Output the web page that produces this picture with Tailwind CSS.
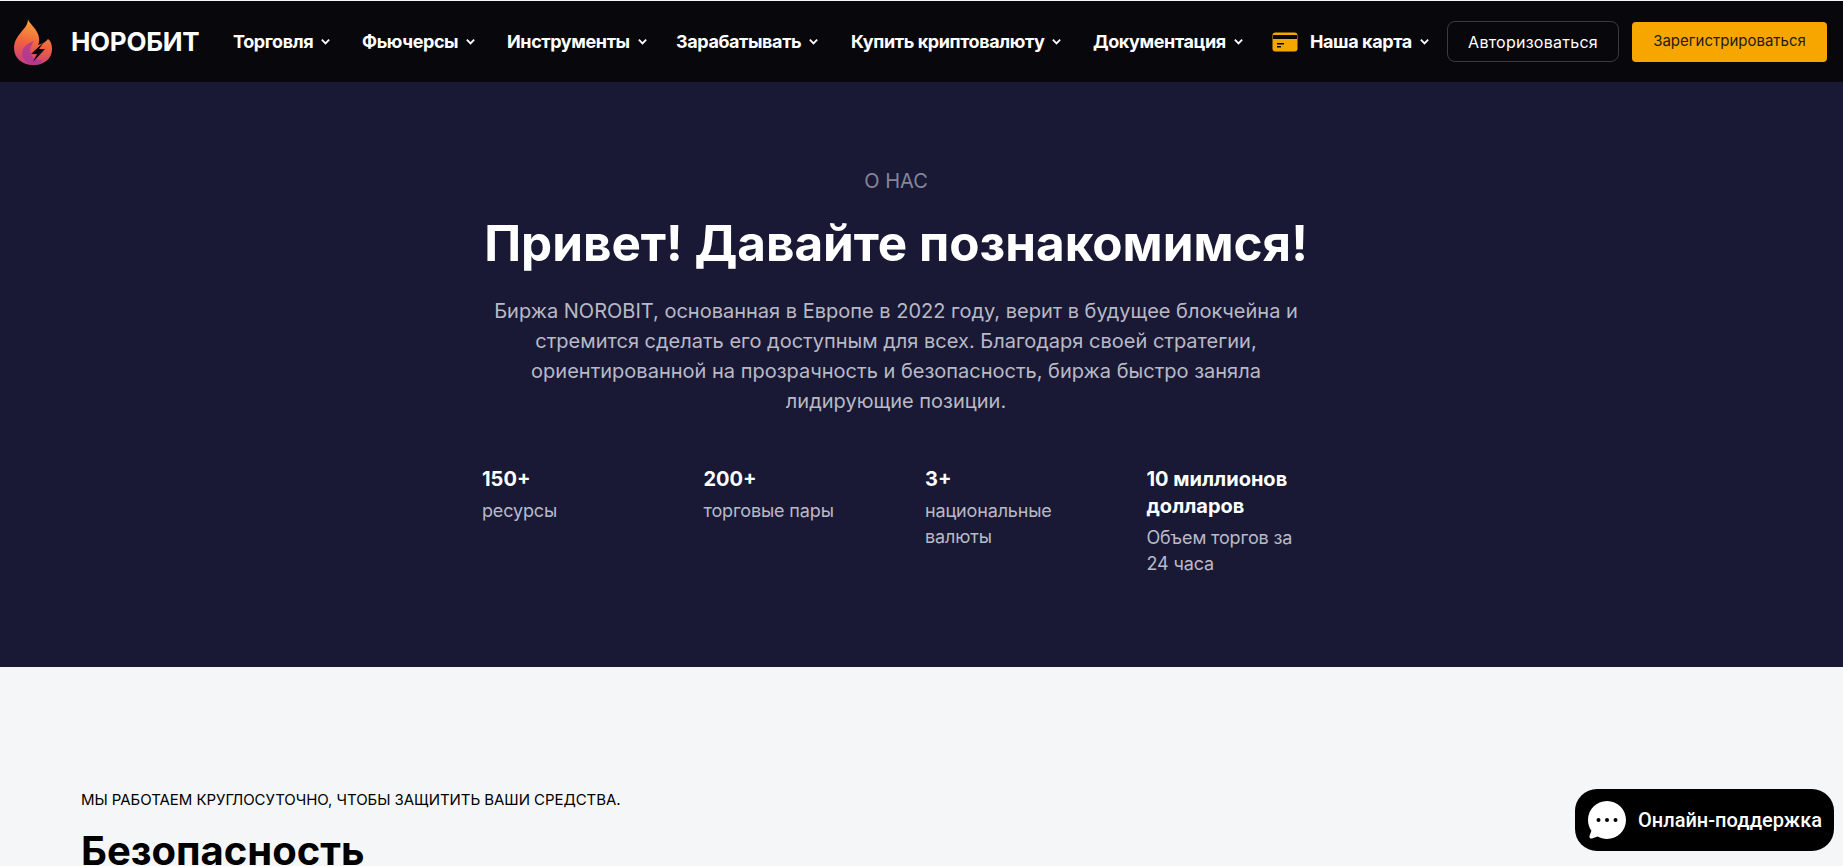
<!DOCTYPE html>
<html lang="ru">
<head>
  <meta charset="UTF-8" />
  <meta name="viewport" content="width=device-width, initial-scale=1" />
  <title>НОРОБИТ - О нас</title>
  <script src="https://cdn.jsdelivr.net/npm/@tailwindcss/browser@4"></script>
</head>
<body class="bg-[#f5f6f8] font-['Inter',sans-serif] h-[866px] overflow-hidden relative">
  <!-- шапка -->
  <header class="mt-px h-[81px] bg-[#07070c] flex items-center pl-[13px] pr-[16px] text-white">
    <a class="flex items-center w-[220px] shrink-0">
      <svg class="w-[40px] h-[48px]" viewBox="0 0 40 48">
        <defs>
          <linearGradient id="fl" x1="0.6" y1="0" x2="0.4" y2="1">
            <stop offset="0" stop-color="#fdaa3a" />
            <stop offset="0.55" stop-color="#f0623f" />
            <stop offset="1" stop-color="#c93d7c" />
          </linearGradient>
        </defs>
        <path fill="url(#fl)" d="M15 1C16 6 25 11 26 20C26.500 23 26 25 25 27C29 26 33 24 35 21C38 23 39 27 39 31C39 41 31 47 20 47C9 47 1 40 1 30C1 23 5 18 9 13C12 10 15 6 15 1z" />
        <path fill="#a8369a" fill-opacity="0.75" d="M23 47c-8 0-14-5-14-11 0-6 5-11 12-13-3 4-5 9-3 13 1 4 6 6 12 6-2 3-4 5-7 5z" />
        <path fill="#07070c" d="M31 24 18 36h6l-4 8 12-13h-6z" />
      </svg>
      <span class="ml-[18px] text-[26px] font-bold tracking-[-0.3px]">НОРОБИТ</span>
    </a>
    <nav class="flex items-center text-[18px] font-bold tracking-[-0.4px]">
      <a class="flex items-center w-[129px]">Торговля<svg class="ml-[7px] w-[11px] h-[11px]" viewBox="0 0 12 12" fill="none" stroke="currentColor" stroke-width="2"><path d="M2 4l4 4 4-4" /></svg></a>
      <a class="flex items-center w-[145px]">Фьючерсы<svg class="ml-[7px] w-[11px] h-[11px]" viewBox="0 0 12 12" fill="none" stroke="currentColor" stroke-width="2"><path d="M2 4l4 4 4-4" /></svg></a>
      <a class="flex items-center w-[169px]">Инструменты<svg class="ml-[7px] w-[11px] h-[11px]" viewBox="0 0 12 12" fill="none" stroke="currentColor" stroke-width="2"><path d="M2 4l4 4 4-4" /></svg></a>
      <a class="flex items-center w-[175px]">Зарабатывать<svg class="ml-[7px] w-[11px] h-[11px]" viewBox="0 0 12 12" fill="none" stroke="currentColor" stroke-width="2"><path d="M2 4l4 4 4-4" /></svg></a>
      <a class="flex items-center w-[242px]">Купить криптовалюту<svg class="ml-[7px] w-[11px] h-[11px]" viewBox="0 0 12 12" fill="none" stroke="currentColor" stroke-width="2"><path d="M2 4l4 4 4-4" /></svg></a>
      <a class="flex items-center w-[179px]">Документация<svg class="ml-[7px] w-[11px] h-[11px]" viewBox="0 0 12 12" fill="none" stroke="currentColor" stroke-width="2"><path d="M2 4l4 4 4-4" /></svg></a>
      <a class="flex items-center">
        <svg class="w-[26px] h-[20px] mr-[12px]" viewBox="0 0 26 20">
          <rect x="0.500" y="0.500" width="25" height="19" rx="3" fill="#f7a600" />
          <rect x="1" y="3" width="24" height="4" fill="#07070c" />
          <path d="M5 11h7v1.500H5zM5 14h4v1.500H5z" fill="#07070c" />
        </svg>
        Наша карта<svg class="ml-[7px] w-[11px] h-[11px]" viewBox="0 0 12 12" fill="none" stroke="currentColor" stroke-width="2"><path d="M2 4l4 4 4-4" /></svg>
      </a>
    </nav>
    <div class="ml-auto flex items-center gap-[13px]">
      <a class="w-[172px] h-[41px] border border-[#3a3a40] rounded-[8px] flex items-center justify-center text-[16px] tracking-[0.25px]">Авторизоваться</a>
      <a class="w-[195px] h-[40px] bg-[#f7a600] text-[#1c1c1c] rounded-[4px] flex items-center justify-center text-[15px]">Зарегистрироваться</a>
    </div>
  </header>

  <!-- о нас -->
  <section class="h-[585px] bg-[#191935] text-white pt-[86px] pl-[482px]">
    <div class="w-[828px] flex flex-col items-center">
      <p class="text-[20px] leading-[26px] text-[#85859a]">О НАС</p>
      <h1 class="mt-[15px] text-[49.400px] leading-[68px] font-bold whitespace-nowrap">Привет! Давайте познакомимся!</h1>
      <p class="mt-[19px] w-[828px] text-center text-[20px] leading-[30px] text-[#b9b9c6]">Биржа NOROBIT, основанная в Европе в 2022 году, верит в будущее блокчейна и стремится сделать его доступным для всех. Благодаря своей стратегии, ориентированной на прозрачность и безопасность, биржа быстро заняла лидирующие позиции.</p>
      <div class="mt-[50px] w-[828px] grid grid-cols-[repeat(4,221.500px)]">
        <div class="pr-[50px]">
          <p class="text-[20px] leading-[27px] font-bold">150+</p>
          <p class="mt-[5px] text-[18px] leading-[26px] tracking-[-0.15px] text-[#b9b9c6]">ресурсы</p>
        </div>
        <div class="pr-[50px]">
          <p class="text-[20px] leading-[27px] font-bold">200+</p>
          <p class="mt-[5px] text-[18px] leading-[26px] tracking-[-0.15px] text-[#b9b9c6]">торговые пары</p>
        </div>
        <div class="pr-[50px]">
          <p class="text-[20px] leading-[27px] font-bold">3+</p>
          <p class="mt-[5px] text-[18px] leading-[26px] tracking-[-0.15px] text-[#b9b9c6]">национальные валюты</p>
        </div>
        <div class="pr-[50px]">
          <p class="text-[20px] leading-[27px] font-bold">10 миллионов долларов</p>
          <p class="mt-[5px] text-[18px] leading-[26px] tracking-[-0.15px] text-[#b9b9c6]">Объем торгов за 24 часа</p>
        </div>
      </div>
    </div>
  </section>

  <!-- безопасность -->
  <section class="pl-[81px] pt-[123px] text-black">
    <p class="text-[15px] leading-[20px] tracking-[-0.05px]">МЫ РАБОТАЕМ КРУГЛОСУТОЧНО, ЧТОБЫ ЗАЩИТИТЬ ВАШИ СРЕДСТВА.</p>
    <h2 class="mt-[15px] text-[40px] leading-[52px] font-bold">Безопасность</h2>
  </section>

  <!-- онлайн-поддержка -->
  <a class="absolute left-[1575px] top-[789px] w-[259px] h-[62px] bg-black rounded-[22px] flex items-center pl-[13px] text-white font-['Roboto',sans-serif] text-[20px] font-medium">
    <svg class="w-[38px] h-[38px] mr-[12px]" viewBox="0 0 38 38">
      <path fill="#fff" d="M19 0C8.500 0 0 8.500 0 19c0 4 1.300 7.800 3.400 10.800L1.500 35c-.5 1.600.8 3 2.400 2.500l5.800-1.900C12.400 37.100 15.600 38 19 38c10.500 0 19-8.500 19-19S29.500 0 19 0z" />
      <circle cx="10.500" cy="19" r="2" fill="#000" />
      <circle cx="19" cy="19" r="2" fill="#000" />
      <circle cx="27.500" cy="19" r="2" fill="#000" />
    </svg>
    Онлайн-поддержка
  </a>
</body>
</html>
